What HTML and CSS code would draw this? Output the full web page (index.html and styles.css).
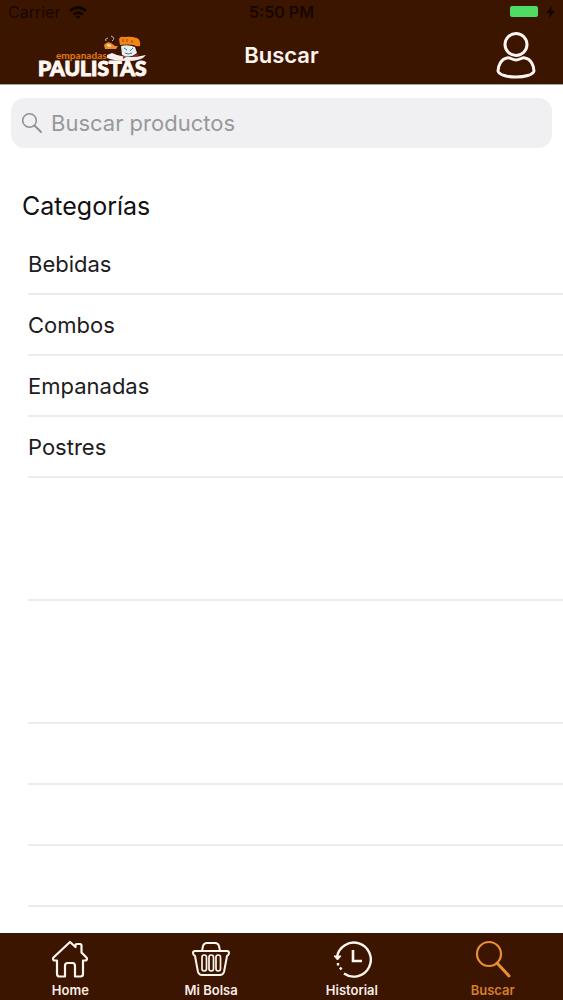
FILE: index.html
```html
<!DOCTYPE html>
<html lang="es">
<head>
<meta charset="utf-8">
<meta name="viewport" content="width=device-width, initial-scale=1">
<title>Buscar</title>
<link rel="stylesheet" href="styles.css">
</head>
<body>
<header class="top">
  <div class="status">
    <span class="carrier">Carrier
      <svg width="20" height="14" viewBox="0 0 20 14"><path d="M1 5Q10-3 19 5L17 7Q10 1 3 7ZM4.500 8.500Q10 4 15.500 8.500L13.500 10.500Q10 8 6.500 10.500ZM7.500 11.500Q10 9.800 12.500 11.500L10 14Z" fill="#120500"/></svg>
    </span>
    <span class="time">5:50 PM</span>
    <span class="power">
      <svg width="46" height="14" viewBox="0 0 46 14"><rect x="1" y="1" width="28" height="11" rx="2" fill="#4fdc62"/><path d="M43 1L37 8H41L40 13L46 6H42Z" fill="#120500"/></svg>
    </span>
  </div>
  <div class="navbar">
    <div class="logo">
      <svg width="114" height="56" viewBox="0 -6 114 56" role="img" aria-label="Empanadas Paulistas">
        <text x="18" y="26" class="logo-small">empanadas</text>
        <text x="0" y="43" class="logo-big">PAULISTAS</text>
        <path d="M69 22L74 20L79 22Q92 26 108 22Q104 28 89 28Q76 28 69 25Z" fill="#f5eeee"/>
        <path d="M83 13Q90 11 97 14L99 20Q92 26 84 22Z" fill="#e4edf0"/>
        <path d="M81 6Q82 3 86 4Q93 3 99 5Q103 7 102 13Q98 14 96 12Q90 11 82 12Z" fill="#f28513"/>
        <path d="M85 6V9M89 6V9M94 7V10" stroke="#9d4405" stroke-width="1"/>
        <path d="M86 15L89 17M95 15L92 18M87 20Q90 22 94 20" fill="none" stroke="#557585" stroke-width="1"/>
        <path d="M96 22L101 21L99 24ZM85 23L88 24L85 26Z" fill="#c5172b"/>
        <path d="M66 12Q69 8 73 10L77 13L80 13L78 16L67 16Z" fill="#ee8a2b"/>
        <path d="M69 12L73 13" stroke="#ffe0a3" stroke-width="2"/>
        <path d="M68 8Q66 6 70 5M74 8Q78 5 73 3" fill="none" stroke="#c7b9af"/>
      </svg>
    </div>
    <h1 class="title">Buscar</h1>
    <button class="profile" type="button" aria-label="Perfil">
      <svg width="42" height="48" viewBox="0 0 42 48" fill="none" stroke="#fff5f2" stroke-width="3" stroke-linejoin="round"><circle cx="21" cy="13.500" r="11"/><path d="M12 27C15 26 17 29 21 29C25 29 27 26 30 27C36 28 39 35 39 40C37 48 5 48 3 40C3 35 6 28 12 27Z"/></svg>
    </button>
  </div>
</header>
<main class="content">
  <label class="search">
    <svg width="22" height="22" viewBox="0 0 22 22" fill="none" stroke="#929295" stroke-width="1.600" stroke-linecap="round"><circle cx="8.500" cy="8.500" r="6.800"/><path d="M13.500 13.500L20 20" stroke-width="2"/></svg>
    <input class="search-input" type="text" placeholder="Buscar productos" aria-label="Buscar productos">
  </label>
  <h2 class="heading">Categorías</h2>
  <ul class="list">
    <li class="row"><a href="#bebidas">Bebidas</a></li>
    <li class="row"><a href="#combos">Combos</a></li>
    <li class="row"><a href="#empanadas">Empanadas</a></li>
    <li class="row"><a href="#postres">Postres</a></li>
    <li class="row tall"></li>
    <li class="row tall"></li>
    <li class="row"></li>
    <li class="row"></li>
    <li class="row"></li>
  </ul>
</main>
<nav class="tabs">
  <a class="tab" href="#home">
    <svg width="40" height="40" viewBox="0 0 40 40" fill="none" stroke="#fff5ef" stroke-width="2.200" stroke-linejoin="round"><path d="M20 3L25.500 8V6Q25.500 5 27 5H30Q31.500 5 31.500 6.500V13.500L36 18Q38 20 36 21.500L33 21.500V35Q33 37.500 30.500 37.500H25V27Q25 24 22.500 24H17.500Q15 24 15 27V37.500H9.500Q7 37.500 7 35V21.500H4Q2 20 4 18Z"/></svg>
    Home
  </a>
  <a class="tab" href="#bolsa">
    <svg width="40" height="40" viewBox="0 0 40 40" fill="none" stroke="#fff5ef" stroke-width="2" stroke-linejoin="round"><path d="M11 12L12 7Q13 4 16 4H24Q27 4 28 7L29 12M4 12H36Q38 12 38 14Q38 16 36 17L33 33Q32 36 29 36H11Q8 36 7 33L4 17Q2 16 2 14Q2 12 4 12Z"/><g stroke-width="1.700"><rect x="11" y="16" width="4.500" height="16" rx="2.200"/><rect x="18" y="16" width="4.500" height="16" rx="2.200"/><rect x="25" y="16" width="4.500" height="16" rx="2.200"/></g></svg>
    Mi Bolsa
  </a>
  <a class="tab" href="#historial">
    <svg width="40" height="40" viewBox="0 0 40 40" fill="none" stroke="#fff5ef" stroke-width="2.400"><path d="M5 18A17 17 0 1 1 12 34.500"/><path d="M2 17H9L5.500 21Z" fill="#fff5ef" stroke-width="1"/><path d="M21 11V22H30" stroke-width="2.600"/><path d="M6 24V26.500M8 28.500L9.500 30.500"/></svg>
    Historial
  </a>
  <a class="tab active" href="#buscar" aria-current="page">
    <svg width="40" height="40" viewBox="0 0 40 40" fill="none" stroke="#e88e35" stroke-width="2.200" stroke-linecap="round"><circle cx="16" cy="15" r="12"/><path d="M24 24L36 37" stroke-width="3"/></svg>
    Buscar
  </a>
</nav>
</body>
</html>
```
FILE: styles.css
```css
* {
  box-sizing: border-box;
}

body {
  display: flex;
  flex-direction: column;
  min-height: 100vh;
  margin: 0;
  background: #fff;
  color: #1c1c1e;
  font-family: Inter, "Liberation Sans", sans-serif;
}

svg {
  display: block;
  flex: none;
}

a {
  color: inherit;
  text-decoration: none;
}

.top {
  background: #3b1500;
  border-bottom: 1px solid #ad9f99;
}

.status {
  display: grid;
  grid-template-columns: 1fr auto 1fr;
  align-items: center;
  height: 24px;
  padding: 0 8px;
  color: #180700;
  font-size: 16px;
  line-height: 24px;
}

.carrier {
  display: flex;
  align-items: center;
  gap: 8px;
}

.time {
  font-weight: 600;
}

.power {
  justify-self: end;
}

.navbar {
  display: grid;
  grid-template-columns: 1fr auto 1fr;
  align-items: center;
  height: 60px;
  padding: 2px 26px 0;
}

.logo {
  padding-left: 12px;
}

.logo-small {
  fill: #d9720f;
  font: 900 10px Lato, sans-serif;
}

.logo-big {
  fill: #fff7f2;
  stroke: #fff7f2;
  stroke-width: 1px;
  font: 900 21px Lato, sans-serif;
}

.title {
  margin: 0;
  color: #fff5ef;
  font-size: 22px;
  font-weight: 600;
  line-height: 30px;
}

.profile {
  justify-self: end;
  padding: 0;
  border: 0;
  background: none;
}

.content {
  flex: 1;
  padding-top: 13px;
}

.search {
  display: flex;
  align-items: center;
  gap: 8px;
  height: 50px;
  margin: 0 11px;
  padding: 0 10px;
  border-radius: 14px;
  background: #f0f0f2;
}

.search-input {
  flex: 1;
  min-width: 0;
  padding: 0;
  border: 0;
  outline: 0;
  background: none;
  color: #1c1c1e;
  font: 22px Inter, "Liberation Sans", sans-serif;
}

.search-input::placeholder {
  color: #98989b;
  opacity: 1;
}

.heading {
  margin: 41px 22px 11px;
  color: #111;
  font-size: 25px;
  font-weight: 400;
  line-height: 34px;
}

.list {
  margin: 0 0 0 28px;
  padding: 0;
  list-style: none;
}

.row {
  display: flex;
  align-items: center;
  min-height: 61px;
  border-bottom: 2px solid #ebebed;
  font-size: 22px;
  line-height: 30px;
}

.tall {
  min-height: 123px;
}

.tabs {
  display: grid;
  grid-template-columns: repeat(4, 1fr);
  height: 67px;
  padding-top: 6px;
  background: #3b1500;
}

.tab {
  display: flex;
  flex-direction: column;
  align-items: center;
  color: #f7ebe5;
  font-size: 13px;
  font-weight: 600;
  line-height: 22px;
}

.active {
  color: #d87d2a;
}
```
